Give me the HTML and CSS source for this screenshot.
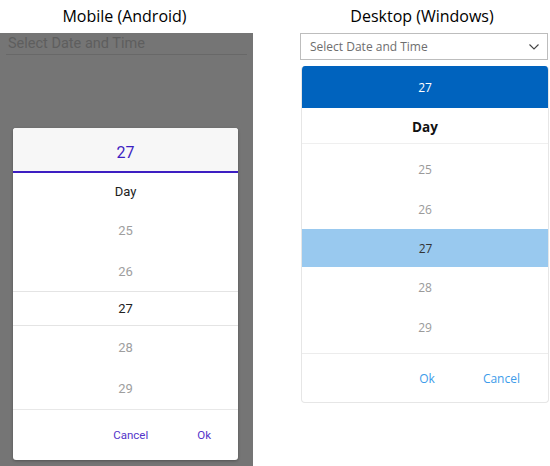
FILE: index.html
```html
<!DOCTYPE html>
<html lang="en">
<head>
<meta charset="utf-8">
<title>Date Time Picker</title>
<link rel="stylesheet" href="styles.css">
</head>
<body>
<div class="app">
  <section class="col mobile">
    <h1 class="title">Mobile (Android)</h1>
    <div class="overlay">
      <div class="m-entry">Select Date and Time</div>
      <div class="m-dialog">
        <div class="m-head">27</div>
        <div class="m-list">
          <div class="m-row m-day">Day</div>
          <div class="m-row m-r25">25</div>
          <div class="m-row m-r26">26</div>
          <div class="m-row m-sel">27</div>
          <div class="m-row m-r28">28</div>
          <div class="m-row m-r29">29</div>
        </div>
        <div class="m-foot">
          <span class="m-btn">Cancel</span>
          <span class="m-btn">Ok</span>
        </div>
      </div>
    </div>
  </section>
  <section class="col desktop">
    <h1 class="title d-title">Desktop (Windows)</h1>
    <div class="d-entry">
      <span class="d-placeholder">Select Date and Time</span>
      <svg class="d-chev" width="10" height="6" viewBox="0 0 10 6"><polyline points="0.5,0.5 5,5 9.5,0.5" fill="none" stroke="#444" stroke-width="1.1"/></svg>
    </div>
    <div class="d-drop">
      <div class="d-head">27</div>
      <div class="d-day">Day</div>
      <div class="d-list">
        <div class="d-row">25</div>
        <div class="d-row">26</div>
        <div class="d-row d-sel">27</div>
        <div class="d-row">28</div>
        <div class="d-row">29</div>
      </div>
      <div class="d-foot">
        <span class="d-btn">Ok</span>
        <span class="d-btn">Cancel</span>
      </div>
    </div>
  </section>
</div>
</body>
</html>
```
FILE: styles.css
```css
* { box-sizing: border-box; }
html, body { margin: 0; padding: 0; background: #fff; }
body { width: 550px; height: 466px; overflow: hidden; }

.app {
  display: grid;
  grid-template-columns: 253px 1fr;
  height: 466px;
}

.title {
  margin: 0;
  height: 33px;
  display: flex;
  align-items: center;
  justify-content: center;
  font-family: "Open Sans", "Noto Sans", sans-serif;
  font-weight: normal;
  font-size: 16px;
  color: #000;
  padding: 0 4px 1px 0;
}

/* ---------- Mobile ---------- */
.overlay {
  background: #757575;
  height: 433px;
  padding-top: 0;
}
.m-entry {
  margin: 0 6px;
  height: 22px;
  line-height: 21px;
  padding-left: 2px;
  border-bottom: 1px solid #686868;
  font-family: Roboto, sans-serif;
  font-size: 14.5px;
  color: #5e5e5e;
}
.m-dialog {
  margin: 73px 0 0 13px;
  width: 225px;
  height: 332px;
  background: #fff;
  border-radius: 3px;
  overflow: hidden;
  box-shadow: 0 1px 3px rgba(0,0,0,0.3);
  display: flex;
  flex-direction: column;
  font-family: Roboto, sans-serif;
}
.m-head {
  height: 45px;
  padding-top: 5px;
  background: #f7f7f7;
  border-bottom: 2px solid #3d1ec2;
  display: flex;
  align-items: center;
  justify-content: center;
  font-size: 16px;
  color: #3d1ec2;
}
.m-list { display: flex; flex-direction: column; }
.m-row {
  display: flex;
  align-items: center;
  justify-content: center;
  font-size: 13px;
  color: #9e9e9e;
}
.m-day { height: 36px; color: #212121; }
.m-r25 { height: 42px; }
.m-r26 { height: 40px; }
.m-sel {
  height: 35px;
  color: #212121;
  border-top: 1px solid #e4e4e4;
  border-bottom: 1px solid #e4e4e4;
}
.m-r28 { height: 42px; }
.m-r29 { height: 41px; }
.m-foot {
  flex: 1;
  border-top: 1px solid #e8e8e8;
  display: flex;
  align-items: center;
  justify-content: flex-end;
  gap: 49px;
  padding: 0 27px 1px 0;
}
.m-btn {
  font-size: 11.5px;
  color: #5334c9;
}

/* ---------- Desktop ---------- */
.desktop {
  padding-left: 47px;
  padding-right: 2px;
  font-family: "Open Sans", "Noto Sans", sans-serif;
}
.d-title { width: 248px; }
.d-entry {
  width: 248px;
  height: 27px;
  border: 1px solid #bdbdbd;
  display: flex;
  align-items: center;
  padding: 0 8px 0 9px;
  font-size: 12px;
  color: #6e6e6e;
}
.d-chev { margin-left: auto; margin-top: 1px; }
.d-drop {
  margin: 6px 0 0 1px;
  width: 248px;
  height: 337px;
  border: 1px solid #e6e6e6;
  border-top: none;
  border-radius: 4px;
  overflow: hidden;
  display: flex;
  flex-direction: column;
}
.d-head {
  height: 42px;
  background: #0063be;
  color: #fff;
  font-size: 12px;
  display: flex;
  align-items: center;
  justify-content: center;
  margin: 0 -1px;
}
.d-day {
  height: 36px;
  padding-top: 3px;
  border-bottom: 1px solid #efefef;
  display: flex;
  align-items: center;
  justify-content: center;
  font-size: 13.5px;
  font-weight: bold;
  color: #111;
}
.d-list {
  padding: 5px 0 6px;
  display: flex;
  flex-direction: column;
}
.d-row {
  height: 40px;
  display: flex;
  align-items: center;
  justify-content: center;
  font-size: 12px;
  color: #9a9a9a;
}
.d-sel {
  height: 38px;
  background: #99c9ef;
  color: #333;
  margin: 0 -1px 0 0;
}
.d-foot {
  flex: 1;
  border-top: 1px solid #ececec;
  display: flex;
  align-items: center;
  justify-content: flex-end;
  gap: 48px;
  padding: 0 28px 0 0;
}
.d-btn {
  font-size: 12px;
  color: #3d9cea;
}
```
